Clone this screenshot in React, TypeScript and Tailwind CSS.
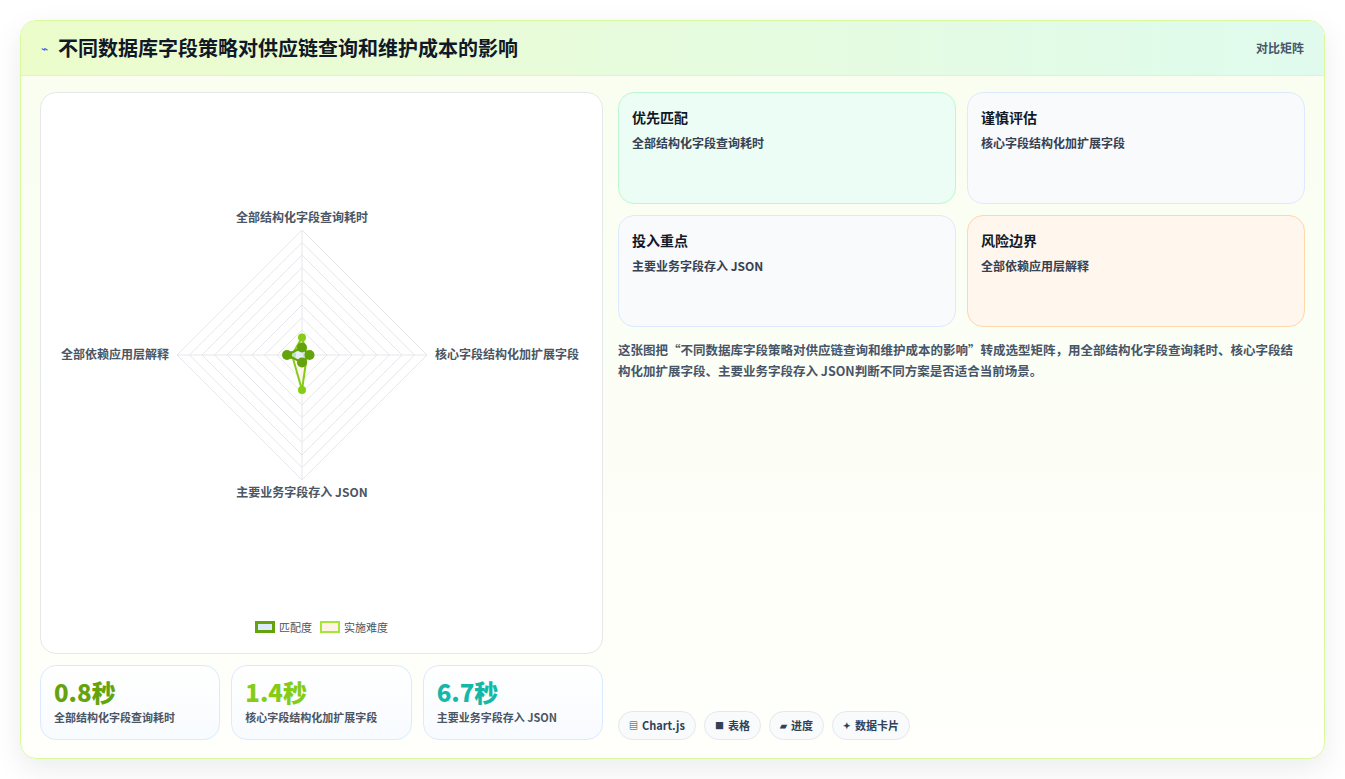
import React from 'react';

const F = { fontFamily: '"Noto Sans CJK SC", "Noto Sans", sans-serif' };

// radar geometry (svg coords, card-local)
const CX = 261;
const CY = 262;
const R = 125;

function pt(dir: number, v: number) {
  const d = (R * v) / 100;
  if (dir === 0) return [CX, CY - d];
  if (dir === 1) return [CX + d, CY];
  if (dir === 2) return [CX, CY + d];
  return [CX - d, CY];
}

function Radar() {
  const rings = Array.from({ length: 10 }, (_, i) => (i + 1) * 10);
  const match = [6, 6, 6, 12];
  const diff = [14, 4, 28, 8];
  const poly = (vals: number[]) => vals.map((v, i) => pt(i, v).join(',')).join(' ');
  return (
    <svg width="562" height="520" viewBox="0 0 562 520">
      {rings.map(r => (
        <polygon key={r} points={poly([r, r, r, r])} fill="none" stroke="#e5e7eb" strokeWidth="1" />
      ))}
      <line x1={CX} y1={CY - R} x2={CX} y2={CY + R} stroke="#e5e7eb" />
      <line x1={CX - R} y1={CY} x2={CX + R} y2={CY} stroke="#e5e7eb" />
      <polygon points={poly(diff)} fill="rgba(254,243,230,0.7)" stroke="#84cc16" strokeWidth="2" />
      {diff.map((v, i) => {
        const [x, y] = pt(i, v);
        return <circle key={i} cx={x} cy={y} r="4" fill="#84cc16" />;
      })}
      <polygon points={poly(match)} fill="rgba(219,234,254,0.7)" stroke="#65a30d" strokeWidth="2" />
      {match.map((v, i) => {
        const [x, y] = pt(i, v);
        return <circle key={i} cx={x} cy={y} r="5" fill="#65a30d" />;
      })}
      <g style={F} fontSize="12" fontWeight="600" fill="#4b5563">
        <text x={CX} y={CY - R - 8} textAnchor="middle">全部结构化字段查询耗时</text>
        <text x={CX} y={CY + R + 17} textAnchor="middle">主要业务字段存入 JSON</text>
        <text x={CX + R + 8} y={CY + 4}>核心字段结构化加扩展字段</text>
        <text x={CX - R - 8} y={CY + 4} textAnchor="end">全部依赖应用层解释</text>
      </g>
    </svg>
  );
}

function Card({ title, text, cls }: { title: string; text: string; cls: string }) {
  return (
    <div className={`rounded-2xl border px-[13px] pt-[14px] h-[112px] ${cls}`}>
      <div className="text-[14px] font-bold text-[#111827]">{title}</div>
      <div className="mt-[6px] text-[12px] font-semibold text-[#374151]">{text}</div>
    </div>
  );
}

function Stat({ v, label, color }: { v: string; label: string; color: string }) {
  return (
    <div className="flex-1 rounded-2xl border border-[#dbeafe] bg-gradient-to-b from-white to-[#f8fbff] px-[13px] pt-[9px] h-[75px]">
      <div className={`text-[24px] font-extrabold leading-[34px] ${color}`}>{v}</div>
      <div className="text-[11px] font-semibold text-[#4b5563]">{label}</div>
    </div>
  );
}

function Chip({ icon, label }: { icon: string; label: string }) {
  return (
    <div className="flex h-[29px] items-center gap-1 rounded-full border border-[#e5e7eb] bg-[#f8fafc] px-[10px] text-[11px] font-bold text-[#334155]">
      <span className="text-[9px]">{icon}</span>
      {label}
    </div>
  );
}

export default function App() {
  return (
    <div className="min-h-[779px] w-full bg-white pt-[20px] px-[20px]" style={F}>
      <div className="w-[1305px] h-[739px] overflow-hidden rounded-[16px] border border-[#d9f99d] bg-gradient-to-b from-[#f9fef0] to-[#fffffb] shadow-[0_10px_30px_rgba(0,0,0,0.08)] flex flex-col">
        <div className="flex h-[55px] shrink-0 items-center justify-between border-b border-[#e2efe0] bg-gradient-to-r from-[#ecfccb] to-[#e0fbee] px-[20px]">
          <div className="flex items-center gap-[10px]">
            <span className="text-[12px] text-[#2563eb]">⌁</span>
            <span className="text-[20px] font-bold text-[#111827]">不同数据库字段策略对供应链查询和维护成本的影响</span>
          </div>
          <span className="text-[12px] font-semibold text-[#475569]">对比矩阵</span>
        </div>
        <div className="flex flex-1 gap-[15px] px-[19px] pt-[16px] pb-[18px]">
          <div className="flex w-[563px] flex-col gap-[11px]">
            <div className="flex h-[562px] flex-col items-center rounded-2xl border border-[#e5e7eb] bg-white">
              <Radar />
              <div className="mt-[6px] flex items-center gap-[8px] text-[11px] text-[#4b5563]">
                <span className="flex items-center gap-1">
                  <span className="inline-block h-[12px] w-[20px] border-[3px] border-[#65a30d] bg-[#dbeafe]" />
                  匹配度
                </span>
                <span className="flex items-center gap-1">
                  <span className="inline-block h-[12px] w-[20px] border-2 border-[#a3e635] bg-[#fef3e6]" />
                  实施难度
                </span>
              </div>
            </div>
            <div className="flex gap-[11px]">
              <Stat v="0.8秒" label="全部结构化字段查询耗时" color="text-[#65a30d]" />
              <Stat v="1.4秒" label="核心字段结构化加扩展字段" color="text-[#84cc16]" />
              <Stat v="6.7秒" label="主要业务字段存入 JSON" color="text-[#14b8a6]" />
            </div>
          </div>
          <div className="flex flex-1 flex-col">
            <div className="grid grid-cols-2 gap-[11px]">
              <Card title="优先匹配" text="全部结构化字段查询耗时" cls="border-[#bbf7d0] bg-[#ecfdf5]" />
              <Card title="谨慎评估" text="核心字段结构化加扩展字段" cls="border-[#dbeafe] bg-[#f8fafc]" />
              <Card title="投入重点" text="主要业务字段存入 JSON" cls="border-[#dbeafe] bg-[#f8fafc]" />
              <Card title="风险边界" text="全部依赖应用层解释" cls="border-[#fed7aa] bg-[#fff7ed]" />
            </div>
            <p className="mt-[12px] text-[12.5px] font-semibold leading-[21px] text-[#475569]">
              这张图把“不同数据库字段策略对供应链查询和维护成本的影响”转成选型矩阵，用全部结构化字段查询耗时、核心字段结构化加扩展字段、主要业务字段存入 JSON判断不同方案是否适合当前场景。
            </p>
            <div className="mt-auto flex gap-[8px]">
              <Chip icon="▤" label="Chart.js" />
              <Chip icon="■" label="表格" />
              <Chip icon="▰" label="进度" />
              <Chip icon="✦" label="数据卡片" />
            </div>
          </div>
        </div>
      </div>
    </div>
  );
}
